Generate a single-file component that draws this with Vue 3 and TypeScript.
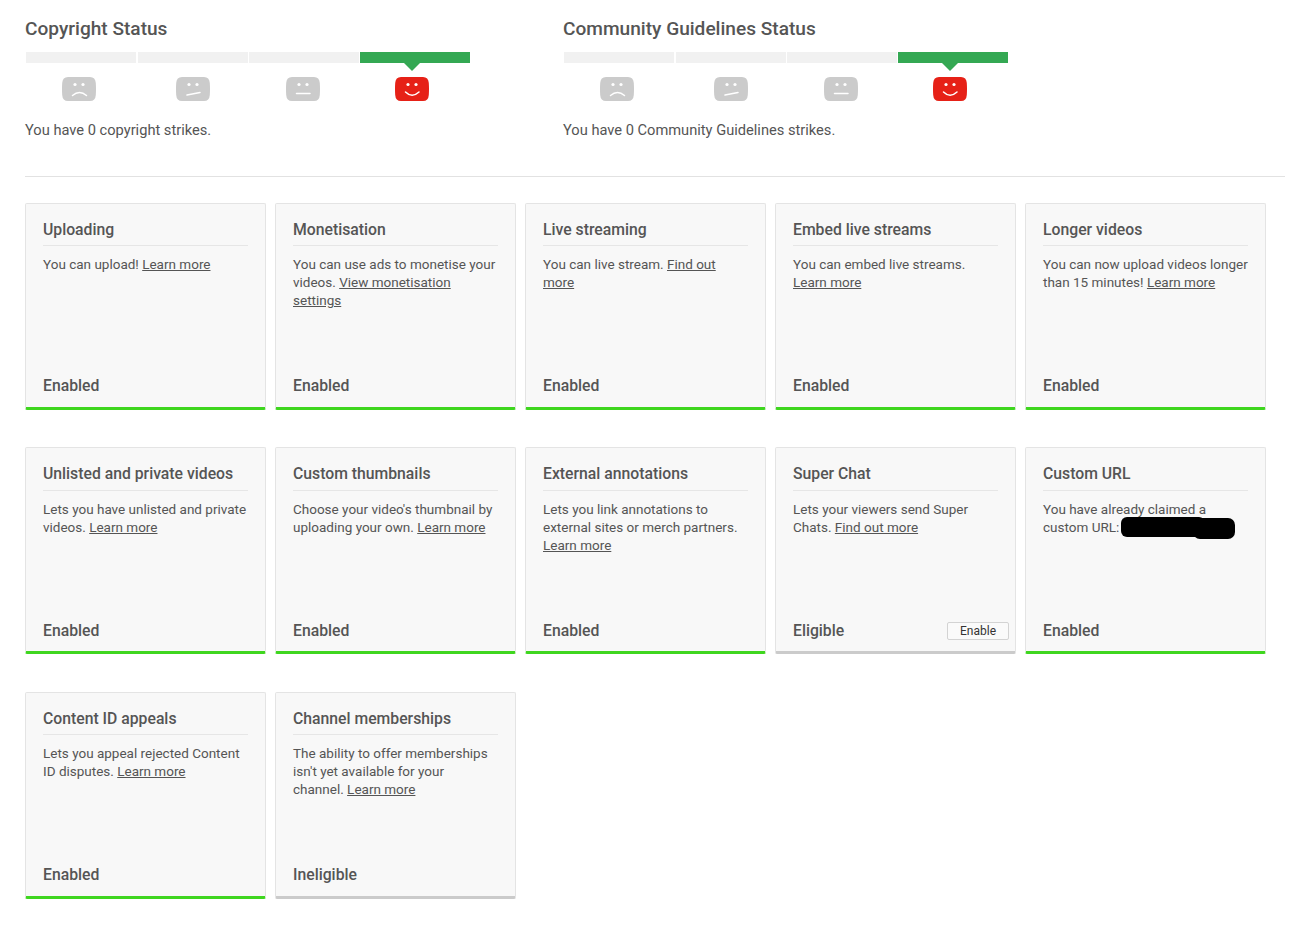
<script setup lang="ts">
interface Part { t: string; link?: boolean }
interface Card { title: string; body: Part[]; status: string; off?: boolean; action?: string; redacted?: boolean }

const statusBlocks = [
  { title: 'Copyright Status', text: 'You have 0 copyright strikes.' },
  { title: 'Community Guidelines Status', text: 'You have 0 Community Guidelines strikes.' },
]

const faces = [
  { cls: 'f1', mouth: 'M10.5 18.5 Q17.5 12.5 24.5 18.5' },
  { cls: 'f2', mouth: 'M11 18 L24 15.4' },
  { cls: 'f3', mouth: 'M10.5 16.5 L24 16.5' },
  { cls: 'f4 on', mouth: 'M10.5 15 Q17 21.5 24 15' },
]

const cards: Card[] = [
  { title: 'Uploading', body: [{ t: 'You can upload! ' }, { t: 'Learn more', link: true }], status: 'Enabled' },
  { title: 'Monetisation', body: [{ t: 'You can use ads to monetise your videos. ' }, { t: 'View monetisation settings', link: true }], status: 'Enabled' },
  { title: 'Live streaming', body: [{ t: 'You can live stream. ' }, { t: 'Find out more', link: true }], status: 'Enabled' },
  { title: 'Embed live streams', body: [{ t: 'You can embed live streams. ' }, { t: 'Learn more', link: true }], status: 'Enabled' },
  { title: 'Longer videos', body: [{ t: 'You can now upload videos longer than 15 minutes! ' }, { t: 'Learn more', link: true }], status: 'Enabled' },
  { title: 'Unlisted and private videos', body: [{ t: 'Lets you have unlisted and private videos. ' }, { t: 'Learn more', link: true }], status: 'Enabled' },
  { title: 'Custom thumbnails', body: [{ t: "Choose your video's thumbnail by uploading your own. " }, { t: 'Learn more', link: true }], status: 'Enabled' },
  { title: 'External annotations', body: [{ t: 'Lets you link annotations to external sites or merch partners. ' }, { t: 'Learn more', link: true }], status: 'Enabled' },
  { title: 'Super Chat', body: [{ t: 'Lets your viewers send Super Chats. ' }, { t: 'Find out more', link: true }], status: 'Eligible', off: true, action: 'Enable' },
  { title: 'Custom URL', body: [{ t: 'You have already claimed a custom URL:' }], status: 'Enabled', redacted: true },
  { title: 'Content ID appeals', body: [{ t: 'Lets you appeal rejected Content ID disputes. ' }, { t: 'Learn more', link: true }], status: 'Enabled' },
  { title: 'Channel memberships', body: [{ t: "The ability to offer memberships isn't yet available for your channel. " }, { t: 'Learn more', link: true }], status: 'Ineligible', off: true },
]
</script>

<template>
  <div class="page">
    <div class="statuses">
      <section v-for="b in statusBlocks" :key="b.title" class="status-block">
        <h2>{{ b.title }}</h2>
        <div class="bar">
          <span class="seg"></span><span class="seg"></span><span class="seg"></span><span class="seg active"></span>
        </div>
        <div class="faces">
          <svg v-for="f in faces" :key="f.cls" :class="['face', f.cls]" width="34" height="24" viewBox="0 0 34 24">
            <path d="M6 0 H28 Q33.4 0 33.8 6 Q34.2 12 33.8 18 Q33.4 24 28 24 H6 Q.6 24 .2 18 Q-.2 12 .2 6 Q.6 0 6 0Z" class="face-bg" />
            <circle cx="13" cy="7.5" r="1.6" fill="#fff" />
            <circle cx="21" cy="7.5" r="1.6" fill="#fff" />
            <path :d="f.mouth" fill="none" stroke="#fff" stroke-width="1.5" stroke-linecap="round" />
          </svg>
        </div>
        <p class="strikes">{{ b.text }}</p>
      </section>
    </div>

    <hr class="rule" />

    <div class="cards">
      <article v-for="c in cards" :key="c.title" :class="['card', { off: c.off }]">
        <h3>{{ c.title }}</h3>
        <p class="body">
          <template v-for="(p, i) in c.body" :key="i">
            <a v-if="p.link" href="#" @click.prevent>{{ p.t }}</a>
            <template v-else>{{ p.t }}</template>
          </template>
          <span v-if="c.redacted" class="redact"></span>
        </p>
        <div class="foot">
          <span class="state">{{ c.status }}</span>
          <button v-if="c.action" class="enable" type="button">{{ c.action }}</button>
        </div>
      </article>
    </div>
  </div>
</template>

<style>
html, body { background: #fff; }
</style>

<style scoped>
.page {
  width: 1309px;
  height: 928px;
  box-sizing: border-box;
  padding: 18px 24px 0 25px;
  font-family: Roboto, "Liberation Sans", sans-serif;
  color: #555;
  overflow: hidden;
}
.statuses { display: flex; }
.status-block { width: 538px; }
h2 {
  margin: 0;
  font-size: 19.1px;
  line-height: 22px;
  font-weight: 500;
  color: #555;
}
.bar {
  display: flex;
  gap: 1px;
  height: 11px;
  margin: 12px 0 0 1px;
}
.seg { flex: none; width: 110px; background: #f1f1f1; position: relative; }
.seg:first-child { margin-right: 1px; }
.seg.active { background: #34a853; }
.seg.active::after {
  content: "";
  position: absolute;
  left: 44px;
  top: 11px;
  border-left: 8px solid transparent;
  border-right: 8px solid transparent;
  border-top: 8px solid #34a853;
}
.faces { display: flex; height: 24px; margin-top: 14px; }
.face { display: block; flex: none; }
.face-bg { fill: #cbcbcb; }
.face.on .face-bg { fill: #e62117; }
.f1 { margin-left: 37px; }
.f2 { margin-left: 80px; }
.f3 { margin-left: 76px; }
.f4 { margin-left: 75px; }
.strikes {
  margin: 20px 0 0;
  font-size: 14.65px;
  line-height: 18px;
  color: #555;
}
.rule {
  border: 0;
  height: 1px;
  background: #e2e2e2;
  margin: 37px 0 26px;
}
.cards {
  display: flex;
  flex-wrap: wrap;
  gap: 37.4px 9px;
  align-content: flex-start;
}
.card {
  width: 241px;
  height: 207px;
  box-sizing: border-box;
  display: flex;
  flex-direction: column;
  padding: 0 17px;
  background: #f8f8f8;
  border: 1px solid #e4e4e4;
  border-bottom: 3px solid #3fd61f;
  border-radius: 2px;
  position: relative;
}
.card.off { border-bottom-color: #cbcbcb; }
h3 {
  margin: 0;
  padding: 16px 0 6.2px;
  font-size: 15.75px;
  line-height: 19px;
  font-weight: 500;
  color: #555;
  border-bottom: 1px solid #e6e6e6;
}
.body {
  margin: 9px 0 0;
  font-size: 13.5px;
  line-height: 18px;
  color: #555;
  position: relative;
}
.body a { color: #555; text-decoration: underline; }
.redact {
  position: absolute;
  left: 78px;
  top: 17px;
  width: 84px;
  height: 20px;
  background: #000;
  border-radius: 6px;
}
.redact::after {
  content: "";
  position: absolute;
  left: 72px;
  top: 1px;
  width: 42px;
  height: 21px;
  background: #000;
  border-radius: 7px;
}
.foot {
  margin-top: auto;
  height: 30.8px;
  display: flex;
  align-items: flex-start;
  justify-content: space-between;
  position: relative;
}
.state {
  font-size: 15.75px;
  line-height: 20px;
  font-weight: 500;
  color: #555;
}
.enable {
  position: absolute;
  right: -11px;
  top: 1px;
  width: 62px;
  height: 18px;
  padding: 0;
  font-family: inherit;
  font-size: 12px;
  line-height: 16px;
  color: #333;
  background: #fafafa;
  border: 1px solid #d3d3d3;
  border-radius: 2px;
}
</style>
